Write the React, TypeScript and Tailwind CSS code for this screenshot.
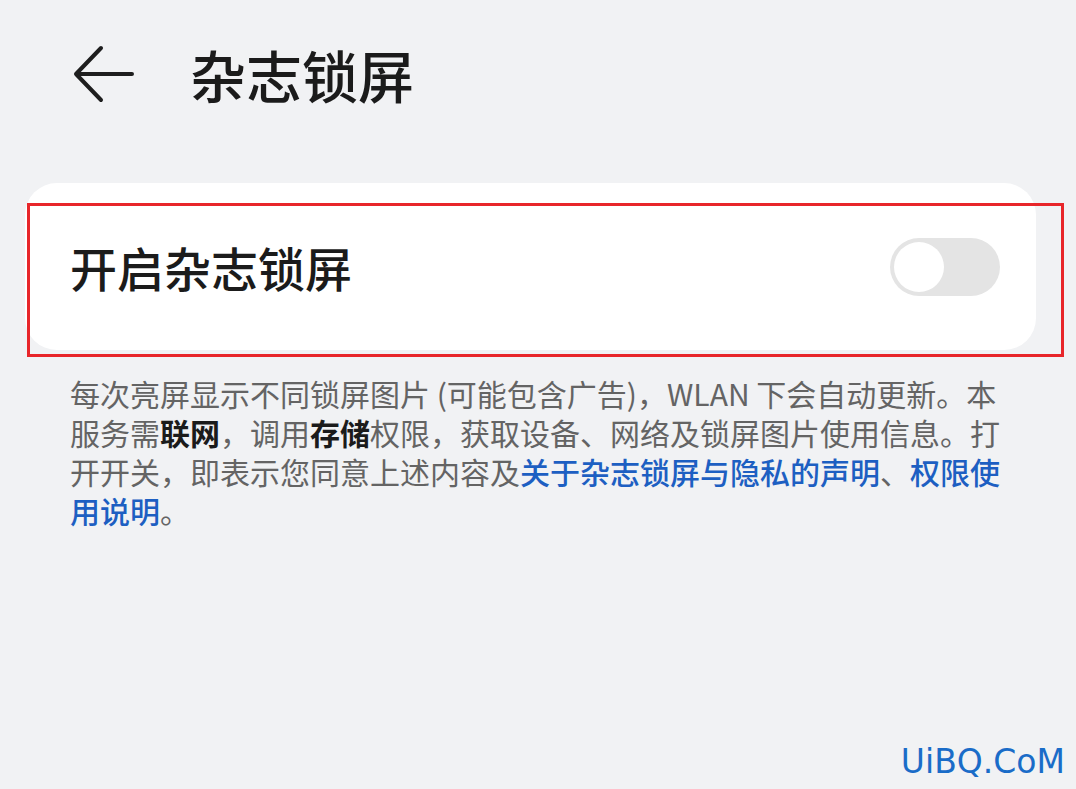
import React from "react";

export default function App() {
  return (
    <div className="relative h-[789px] w-full overflow-hidden bg-[#f1f2f4] font-['Noto_Sans_CJK_SC',_'Noto_Sans',_sans-serif]">
      <header className="flex h-[148px] items-center pl-[73px]">
        <button className="flex h-[60px] w-[62px] items-center justify-start">
          <svg width="62" height="58" viewBox="0 0 62 58" fill="none">
            <path
              d="M59 29H3M28 3L3 29L28 55"
              stroke="#1e1e1e"
              strokeWidth="4"
              strokeLinecap="round"
              strokeLinejoin="round"
            />
          </svg>
        </button>
        <h1 className="ml-[55px] text-[56px] font-medium leading-none text-[#1b1b1b]">
          杂志锁屏
        </h1>
      </header>

      <section className="relative mt-[35px] ml-[25px] w-[1011px]">
        <div className="flex h-[167px] items-center justify-between rounded-[32px] bg-white pl-[45px] pr-[36px]">
          <span className="text-[47px] font-medium leading-none text-[#1b1b1b]">
            开启杂志锁屏
          </span>
          <div className="flex h-[58px] w-[110px] items-center rounded-full bg-[#e4e4e4] px-[4px]">
            <div className="h-[50px] w-[50px] rounded-full bg-white" />
          </div>
        </div>
        {/* annotation box */}
        <div className="pointer-events-none absolute left-[2px] top-[20px] h-[154px] w-[1037px] border-[3px] border-[#e8262a]" />
      </section>

      <p className="mt-[24px] pl-[70px] text-[30px] leading-[39px] text-[#646464]">
        每次亮屏显示不同锁屏图片 (可能包含广告)，WLAN 下会自动更新。本
        <br />
        服务需<span className="font-bold text-[#1b1b1b]">联网</span>，调用
        <span className="font-bold text-[#1b1b1b]">存储</span>
        权限，获取设备、网络及锁屏图片使用信息。打
        <br />
        开开关，即表示您同意上述内容及
        <span className="font-medium text-[#1d5fc2]">关于杂志锁屏与隐私的声明</span>
        、<span className="font-medium text-[#1d5fc2]">权限使</span>
        <br />
        <span className="font-medium text-[#1d5fc2]">用说明</span>。
      </p>

      <div className="absolute right-[11px] top-[745px] font-['DejaVu_Sans',_sans-serif] text-[33px] leading-none text-[#1a6cc8]">
        UiBQ.CoM
      </div>
    </div>
  );
}
